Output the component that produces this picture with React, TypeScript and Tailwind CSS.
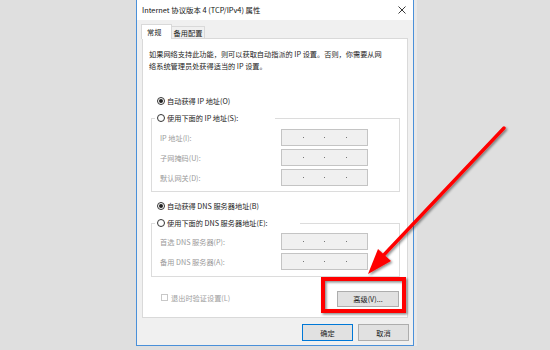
import React from "react";

function Radio({ checked }: { checked?: boolean }) {
  return (
    <span className="w-[8px] h-[8px] rounded-full border border-[#333] bg-white flex items-center justify-center shrink-0">
      {checked && <span className="w-[4px] h-[4px] rounded-full bg-[#222]" />}
    </span>
  );
}

function IpField() {
  return (
    <div className="w-[87px] h-[17px] bg-[#f0f0f0] border border-[#c4c4c4] flex items-center justify-evenly">
      <span className="w-[1px] h-[1px] bg-[#777]" />
      <span className="w-[1px] h-[1px] bg-[#777]" />
      <span className="w-[1px] h-[1px] bg-[#777]" />
    </div>
  );
}

function FieldRow({ label }: { label: string }) {
  return (
    <div className="flex items-center h-[17px]">
      <span className="w-[121px] text-[#9a9a9a] leading-[12px]">{label}</span>
      <IpField />
    </div>
  );
}

function Group({
  legend,
  rows,
  fieldsTop,
  bottom,
  legendPad,
}: {
  legend: string;
  rows: string[];
  fieldsTop: string;
  bottom: string;
  legendPad: string;
}) {
  return (
    <div className={`ml-[8px] mr-[7px] border border-[#dcdcdc] flex flex-col ${bottom}`}>
      <div className={`-mt-[7px] ml-[3px] pl-[2px] bg-white flex items-center gap-[2px] h-[12px] w-fit ${legendPad}`}>
        <Radio />
        <span className="leading-[12px]">{legend}</span>
      </div>
      <div className={`flex flex-col gap-[3px] pl-[8px] ${fieldsTop}`}>
        {rows.map((r) => (
          <FieldRow key={r} label={r} />
        ))}
      </div>
    </div>
  );
}

export default function App() {
  return (
    <div className="relative w-[550px] h-[350px] overflow-hidden bg-[#dfdfdf] flex font-['Noto_Sans_CJK_SC','Noto_Sans',sans-serif] text-[7.2px] text-[#1a1a1a]">
      <div className="w-[136px] shrink-0" />
      <div className="w-[278px] h-[346px] shrink-0 flex flex-col bg-[#f0f0f0] border-x border-b border-[#4a90d9]">
        {/* title bar */}
        <div className="h-[20px] bg-white flex items-center justify-between pl-[5px] pr-[6px] shrink-0">
          <span className="text-[7.4px] leading-[12px] text-[#111]">Internet 协议版本 4 (TCP/IPv4) 属性</span>
          <svg width="8" height="8" viewBox="0 0 8 8" className="mr-[1px]">
            <path d="M0.5 0.5 L7.5 7.5 M7.5 0.5 L0.5 7.5" stroke="#222" strokeWidth="0.9" />
          </svg>
        </div>
        {/* tabs */}
        <div className="px-[5px] pt-[4px] flex flex-col">
          <div className="flex items-end h-[14px]">
            <div className="-ml-[1px] w-[31px] h-[15px] bg-white border border-b-0 border-[#d9d9d9] pl-[5px] flex items-center relative z-10 -mb-[1px]">
              <span className="leading-[12px]">常规</span>
            </div>
            <div className="w-[33px] h-[12px] bg-[#f0f0f0] border border-l-0 border-b-0 border-[#d9d9d9] flex items-center justify-center">
              <span className="leading-[12px]">备用配置</span>
            </div>
          </div>
          {/* panel */}
          <div className="h-[280px] bg-white border border-[#d9d9d9] flex flex-col">
            <p className="mt-[9px] pl-[6px] leading-[12px] text-[#222]">
              如果网络支持此功能，则可以获取自动指派的 IP 设置。否则，你需要从网
              <br />
              络系统管理员处获得适当的 IP 设置。
            </p>
            <div className="mt-[23px] pl-[14px] flex items-center gap-[2px] h-[12px]">
              <Radio checked />
              <span className="leading-[12px]">自动获得 IP 地址(O)</span>
            </div>
            <div className="mt-[11px]">
              <Group
                legend="使用下面的 IP 地址(S):"
                rows={["IP 地址(I):", "子网掩码(U):", "默认网关(D):"]}
                fieldsTop="mt-[5px]"
                bottom="pb-[5px]"
                legendPad="pr-[37px]"
              />
            </div>
            <div className="mt-[8px] pl-[14px] flex items-center gap-[2px] h-[12px]">
              <Radio checked />
              <span className="leading-[12px]">自动获得 DNS 服务器地址(B)</span>
            </div>
            <div className="mt-[11px]">
              <Group
                legend="使用下面的 DNS 服务器地址(E):"
                rows={["首选 DNS 服务器(P):", "备用 DNS 服务器(A):"]}
                fieldsTop="mt-[4px]"
                bottom="pb-[6px]"
                legendPad="pr-[32px]"
              />
            </div>
            <div className="mt-[14px] pl-[18px] pr-[8px] flex justify-between h-[16px]">
              <div className="flex items-center gap-[3px] -mt-[3px]">
                <span className="w-[7px] h-[7px] border border-[#c8c8c8] bg-white" />
                <span className="leading-[12px] text-[#a0a0a0]">退出时验证设置(L)</span>
              </div>
              <div className="w-[62px] h-[16px] bg-[#e1e1e1] border border-[#adadad] flex items-center justify-center">
                <span className="leading-[12px]">高级(V)...</span>
              </div>
            </div>
          </div>
        </div>
        {/* buttons */}
        <div className="mt-[6px] pr-[4px] flex justify-end gap-[5px]">
          <div className="w-[51px] h-[17px] bg-[#e1e1e1] border-[1.5px] border-[#0078d7] flex items-center justify-center">
            <span className="leading-[12px]">确定</span>
          </div>
          <div className="w-[51px] h-[17px] bg-[#e1e1e1] border border-[#adadad] flex items-center justify-center">
            <span className="leading-[12px]">取消</span>
          </div>
        </div>
      </div>
      <div className="w-[3px] h-[346px] bg-[#e8e8e8] shrink-0" />

      {/* annotation overlay */}
      <svg
        className="absolute left-0 top-0 pointer-events-none"
        width="550"
        height="350"
        viewBox="0 0 550 350"
      >
        <defs>
          <filter id="sh" x="-20%" y="-20%" width="140%" height="140%">
            <feDropShadow dx="1.5" dy="1.5" stdDeviation="1.2" floodColor="#000" floodOpacity="0.45" />
          </filter>
        </defs>
        <g filter="url(#sh)">
          <rect x="323" y="279" width="81" height="32" fill="none" stroke="#ff0000" strokeWidth="4" />
          <line x1="504" y1="128" x2="380" y2="259" stroke="#ff0000" strokeWidth="3.4" strokeLinecap="round" />
          <polygon points="368,274 378,249 391,261" fill="#ff0000" />
        </g>
      </svg>
    </div>
  );
}
